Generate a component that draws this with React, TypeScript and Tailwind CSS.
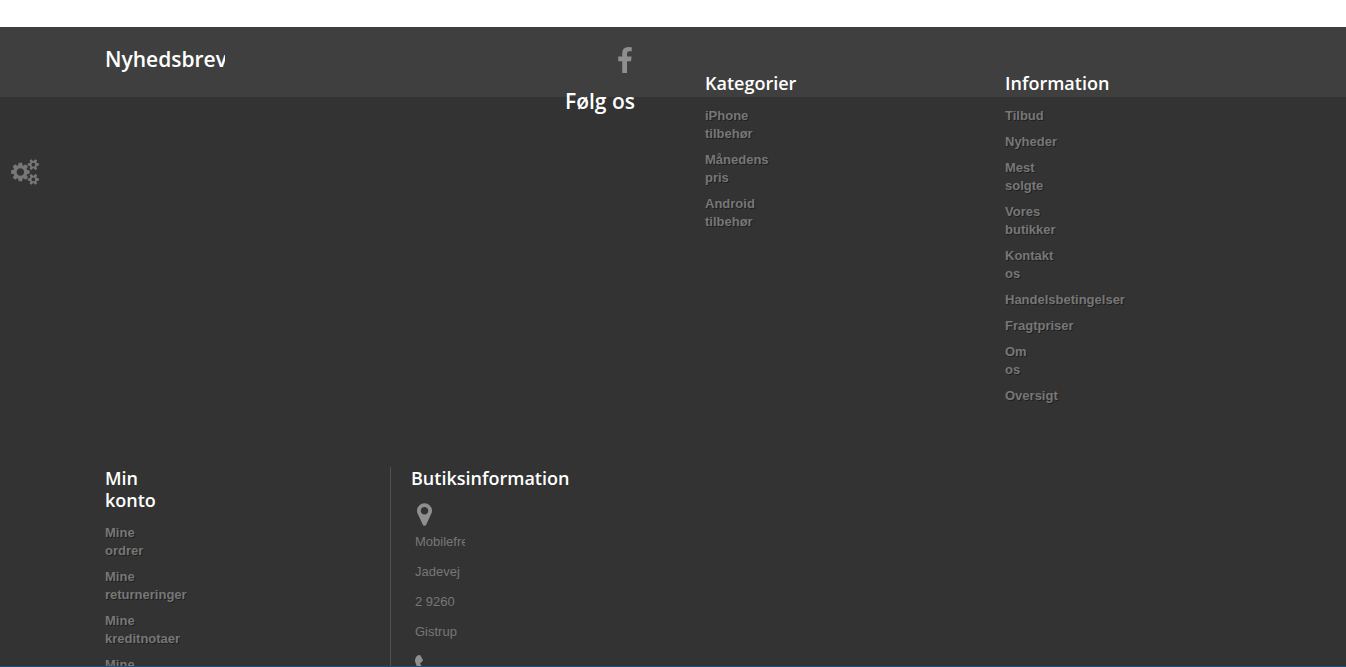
import type { ReactNode } from 'react';

const CATEGORIES = ['iPhone tilbehør', 'Månedens pris', 'Android tilbehør'];

const INFORMATION = [
    'Tilbud',
    'Nyheder',
    'Mest solgte',
    'Vores butikker',
    'Kontakt os',
    'Handelsbetingelser',
    'Fragtpriser',
    'Om os',
    'Oversigt',
];

const ACCOUNT = ['Mine ordrer', 'Mine returneringer', 'Mine kreditnotaer', 'Mine adresser'];

/**
 * Shop footer: newsletter strip, link columns, account and store info
 */
export default function App() {
    return (
        <div className="flex h-screen flex-col overflow-hidden bg-white pt-[27px] font-['Liberation_Sans',Arial,sans-serif] text-[13px] leading-[18px]">
            <footer className="flex min-h-0 flex-1 overflow-hidden border-b border-[#1f4e7d] bg-[linear-gradient(#3f3f3f_70px,#333_70px)] text-[#777]">
                <aside className="w-[90px] shrink-0 pt-[132px] pl-[11px]">
                    <button type="button" aria-label="Indstillinger" className="block">
                        <CogsIcon />
                    </button>
                </aside>

                <div className="mr-14 flex-1">
                    <div className="grid grid-cols-4">
                        <div className="col-span-2 flex justify-between pt-5 pr-[55px] pl-[15px]">
                            <section className="w-[120px] overflow-hidden">
                                <BlockTitle>Nyhedsbrev</BlockTitle>
                            </section>
                            <section>
                                <a href="#facebook" aria-label="Facebook" className="mb-4 flex justify-end pr-[3px]">
                                    <FacebookIcon />
                                </a>
                                <BlockTitle>Følg os</BlockTitle>
                            </section>
                        </div>
                        <section className="px-[15px] pt-[45px]">
                            <ColumnTitle>Kategorier</ColumnTitle>
                            <LinkList links={CATEGORIES} />
                        </section>
                        <section className="px-[15px] pt-[45px]">
                            <ColumnTitle>Information</ColumnTitle>
                            <LinkList links={INFORMATION} />
                        </section>
                    </div>

                    <div className="mt-[62px] grid grid-cols-4">
                        <section className="px-[15px]">
                            <div className="w-8">
                                <ColumnTitle>Min konto</ColumnTitle>
                            </div>
                            <LinkList links={ACCOUNT} />
                        </section>
                        <section className="border-l border-[#515151] pl-5">
                            <ColumnTitle>Butiksinformation</ColumnTitle>
                            <ul className="w-[54px] overflow-hidden pt-px pl-1 leading-[30px]">
                                <li>
                                    <MarkerIcon />
                                    Mobilefreaks Jadevej 2 9260 Gistrup
                                </li>
                                <li className="pt-2">
                                    <PhoneIcon />
                                </li>
                            </ul>
                        </section>
                    </div>
                </div>
            </footer>
        </div>
    );
}

function BlockTitle({ children }: { children: ReactNode }) {
    return (
        <h4 className="font-['Open_Sans',sans-serif] text-[21px] leading-[25px] font-semibold text-white">
            {children}
        </h4>
    );
}

function ColumnTitle({ children }: { children: ReactNode }) {
    return (
        <h4 className="mb-[13px] font-['Open_Sans',sans-serif] text-lg leading-[22px] font-semibold text-white">
            {children}
        </h4>
    );
}

function LinkList({ links }: { links: string[] }) {
    return (
        <ul className="w-8 space-y-2">
            {links.map((label) => (
                <li key={label}>
                    <a href="#" className="block font-bold text-shadow-[1px_1px_0_rgba(0,0,0,0.4)] hover:text-white">
                        {label}
                    </a>
                </li>
            ))}
        </ul>
    );
}

function CogsIcon() {
    return (
        <svg viewBox="0 0 1920 1792" className="h-[26px] w-7 fill-[#777]">
            <path d="M896 896q0-106-75-181t-181-75-181 75-75 181 75 181 181 75 181-75 75-181zm768 512q0-52-38-90t-90-38-90 38-38 90q0 53 37.5 90.5t90.5 37.5 90.5-37.5 37.5-90.5zm0-1024q0-52-38-90t-90-38-90 38-38 90q0 53 37.5 90.5t90.5 37.5 90.5-37.5 37.5-90.5zm-384 421v185q0 10-7 19.5t-16 10.5l-155 24q-11 35-32 76 34 48 90 115 7 11 7 20 0 12-7 19-23 30-82.5 89.5t-78.5 59.5q-11 0-21-7l-115-90q-37 19-77 31-11 108-23 155-7 24-30 24h-186q-11 0-20-7.5t-10-17.5l-23-153q-34-10-75-31l-118 89q-7 7-20 7-11 0-21-8-144-133-144-160 0-9 7-19 10-14 41-53t47-61q-23-44-35-82l-152-24q-10-1-17-9.5t-7-19.5v-185q0-10 7-19.5t16-10.5l155-24q11-35 32-76-34-48-90-115-7-11-7-20 0-12 7-20 22-30 82-89t79-59q11 0 21 7l115 90q34-18 77-32 11-108 23-154 7-24 30-24h186q11 0 20 7.5t10 17.5l23 153q34 10 75 31l118-89q8-7 20-7 11 0 21 8 144 133 144 160 0 8-7 19-12 16-42 54t-45 60q23 48 34 82l152 23q10 2 17 10.5t7 19.5zm640 533v140q0 16-149 31-12 27-30 52 51 113 51 138 0 4-4 7-122 71-124 71-8 0-46-47t-52-68q-20 2-30 2t-30-2q-14 21-52 68t-46 47q-2 0-124-71-4-3-4-7 0-25 51-138-18-25-30-52-149-15-149-31v-140q0-16 149-31 13-29 30-52-51-113-51-138 0-4 4-7 4-2 35-20t59-34 30-16q8 0 46 46.5t52 67.5q20-2 30-2t30 2q51-71 92-112l6-2q4 0 124 70 4 3 4 7 0 25-51 138 17 23 30 52 149 15 149 31zm0-1024v140q0 16-149 31-12 27-30 52 51 113 51 138 0 4-4 7-122 71-124 71-8 0-46-47t-52-68q-20 2-30 2t-30-2q-14 21-52 68t-46 47q-2 0-124-71-4-3-4-7 0-25 51-138-18-25-30-52-149-15-149-31v-140q0-16 149-31 13-29 30-52-51-113-51-138 0-4 4-7 4-2 35-20t59-34 30-16q8 0 46 46.5t52 67.5q20-2 30-2t30 2q51-71 92-112l6-2q4 0 124 70 4 3 4 7 0 25-51 138 17 23 30 52 149 15 149 31z" />
        </svg>
    );
}

function FacebookIcon() {
    return (
        <svg viewBox="479 0 864 1664" className="h-[26px] w-[14px] fill-[#908f8f]">
            <path d="M1343 12v264h-157q-86 0-116 36t-30 108v189h293l-39 296h-254v759h-306v-759h-255v-296h255v-218q0-186 104-288.5t277-102.5q147 0 228 12z" />
        </svg>
    );
}

function MarkerIcon() {
    return (
        <svg viewBox="384 128 1024 1536" className="mb-px ml-0.5 h-[23px] w-[15px] fill-[#908f8f]">
            <path d="M1152 640q0-106-75-181t-181-75-181 75-75 181 75 181 181 75 181-75 75-181zm256 0q0 109-33 179l-364 774q-16 33-47.5 52t-67.5 19-67.5-19-46.5-52l-365-774q-33-70-33-179 0-212 150-362t362-150 362 150 150 362z" />
        </svg>
    );
}

function PhoneIcon() {
    return (
        <svg viewBox="192 128 1408 1408" className="size-[22px] fill-[#908f8f]">
            <path d="M1600 1240q0 27-10 70.5t-21 68.5q-21 50-122 106-94 51-186 51-27 0-53-3.5t-57-12.5-47-14.5-55.5-20.5-49.5-18q-98-35-175-83-127-79-264-216t-216-264q-48-77-83-175-3-9-18-49.5t-20.5-55.5-14.5-47-12.5-57-3.5-53q0-92 51-186 56-101 106-122 25-11 68.5-21t70.5-10q14 0 21 3 18 6 53 76 11 19 30 54t35 63.5 31 53.5q3 4 17.5 25t21.5 35.5 7 28.5q0 20-28.5 50t-62 55-62 53-28.5 46q0 9 5 22.5t8.5 20.5 14 24 11.5 19q76 137 174 235t235 174q2 1 19 11.5t24 14 20.5 8.5 22.5 5q18 0 46-28.5t53-62 55-62 50-28.5q14 0 28.5 7t35.5 21.5 25 17.5q25 15 53.5 31t63.5 35 54 30q70 35 76 53 3 7 3 21z" />
        </svg>
    );
}
